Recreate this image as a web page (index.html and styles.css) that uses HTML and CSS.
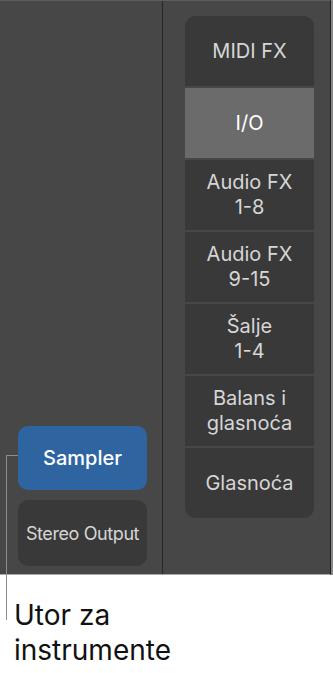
FILE: index.html
```html
<!DOCTYPE html>
<html lang="en">
<head>
    <meta charset="UTF-8">
    <meta name="viewport" content="width=device-width, initial-scale=1.0">
    <title>Mixer kanal</title>
    <link rel="stylesheet" href="styles.css">
</head>
<body>

    <div class="panel">
        <div class="strip">
            <div class="slot sampler">Sampler</div>
            <div class="slot output">Stereo Output</div>
        </div>

        <div class="side">
            <div class="views">
                <div class="view">MIDI FX</div>
                <div class="view active">I/O</div>
                <div class="view">Audio FX<br>1-8</div>
                <div class="view">Audio FX<br>9-15</div>
                <div class="view">Šalje<br>1-4</div>
                <div class="view">Balans i<br>glasnoća</div>
                <div class="view">Glasnoća</div>
            </div>
        </div>
    </div>

    <!-- callout line to the instrument slot -->
    <div class="callout"></div>

    <p class="caption">Utor za<br>instrumente</p>

</body>
</html>
```

FILE: styles.css
```css
body {
    margin: 0;
    background: #fff;
    font-family: Inter, "Liberation Sans", sans-serif;
    position: relative;
    width: 333px;
    height: 673px;
    overflow: hidden;
}
.panel {
    display: flex;
    width: 330px;
    height: 573px;
    background-color: #474747;
    border-top: 1px solid #5c5c5c;
    border-right: 1px solid #1f1f1f;
    border-bottom: 1px solid #a8a8a8;
    box-shadow: 2px 0 0 #8a8a8a;
}
.strip {
    width: 163px;
    border-right: 1px solid #262626;
    display: flex;
    flex-direction: column;
    justify-content: flex-end;
    gap: 10px;
    padding: 0 0 8px 18px;
    box-sizing: border-box;
}
.slot {
    width: 129px;
    border-radius: 10px;
    display: flex;
    align-items: center;
    justify-content: center;
    color: #d6d6d6;
}
.sampler {
    height: 64px;
    background-color: #2e65a1;
    color: #fff;
    font-size: 20px;
    font-weight: 500;
}
.output {
    height: 66px;
    background-color: #393939;
    font-size: 18px;
    letter-spacing: -0.4px;
}
.side {
    flex: 1;
    padding: 15px 0 0 22px;
}
.views {
    width: 129px;
    display: flex;
    flex-direction: column;
    gap: 2px;
    border-radius: 10px;
    overflow: hidden;
}
.view {
    height: 70px;
    background-color: #393939;
    color: #d6d6d6;
    font-size: 20px;
    line-height: 25px;
    text-align: center;
    display: flex;
    align-items: center;
    justify-content: center;
}
.view.active {
    background-color: #6b6b6b;
    color: #fff;
}
.callout {
    position: absolute;
    left: 6px;
    top: 455px;
    width: 12px;
    height: 165px;
    border-top: 1.5px solid #8c8c8c;
    border-left: 1.5px solid #8c8c8c;
    box-sizing: border-box;
}
.caption {
    margin: 23px 0 0 14px;
    font-size: 28px;
    line-height: 35px;
    color: #111;
}
```
